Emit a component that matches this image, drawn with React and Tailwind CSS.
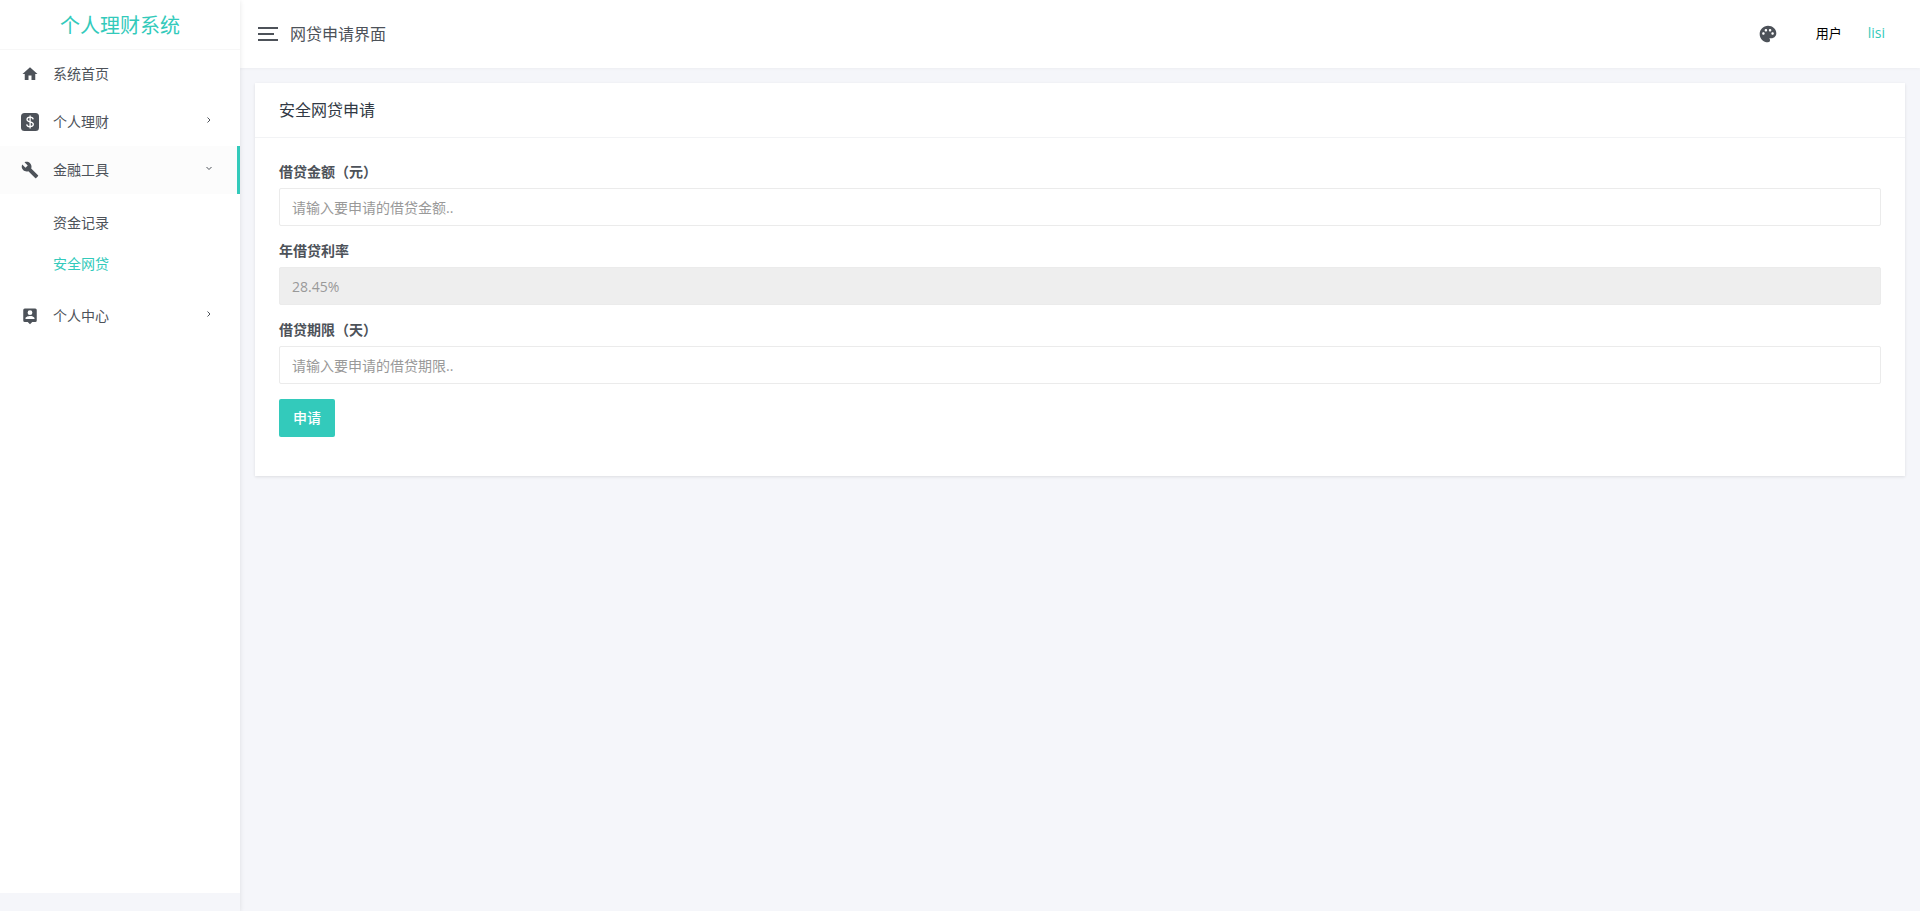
import { MdHome, MdPalette, MdBuild } from "react-icons/md";

function DollarIcon() {
  return (
    <svg viewBox="0 0 18 18" className="size-[18px]" aria-hidden="true">
      <rect width="18" height="18" rx="3.5" fill="currentColor" />
      <path
        d="M12.2 6.3C12 4.9 10.9 4.2 9.1 4.2C7.3 4.2 6 5.1 6 6.5C6 9.7 12.3 7.9 12.3 11.3C12.3 12.8 11 13.7 9.1 13.7C7.1 13.7 5.9 12.8 5.700 11.3M9.1 2.6V15.4"
        fill="none"
        stroke="#fff"
        strokeWidth="1.3"
      />
    </svg>
  );
}

function AccountPinIcon() {
  return (
    <svg viewBox="0 0 24 24" className="size-[18px]" fill="currentColor" aria-hidden="true">
      <path
        fillRule="evenodd"
        d="M5 2H19A2 2 0 0 1 21 4V18A2 2 0 0 1 19 20H15L12 23L9 20H5A2 2 0 0 1 3 18V4A2 2 0 0 1 5 2ZM12 4.300A3.200 3.200 0 1 0 12 10.700A3.200 3.200 0 1 0 12 4.300ZM18 16V15.100C18 13.100 14 12 12 12C10 12 6 13.100 6 15.100V16Z"
      />
    </svg>
  );
}

function Chevron({ down }) {
  return (
    <svg viewBox="0 0 8 8" className="mr-6 mb-1 ml-auto size-2" aria-hidden="true">
      <path
        d={down ? "M1.500 3L4 5.500L6.500 3" : "M2.500 1.500L5 4L2.500 6.500"}
        fill="none"
        stroke="currentColor"
        strokeWidth="1"
      />
    </svg>
  );
}

function NavItem({ icon, label, chevron, active }) {
  return (
    <li>
      <a
        href="#"
        className={
          active
            ? "flex h-12 items-center border-r-[3px] border-[#33cabb] bg-[#fcfcfc]"
            : "flex h-12 items-center border-r-[3px] border-transparent"
        }
      >
        <span className="mr-[13px] ml-5 flex w-5 justify-center">{icon}</span>
        <span>{label}</span>
        {chevron && <Chevron down={chevron === "down"} />}
      </a>
    </li>
  );
}

function Field({ id, label, ...props }) {
  return (
    <div className="mb-[15px]">
      <label htmlFor={id} className="mb-[6px] block leading-[20px] font-bold">
        {label}
      </label>
      <input
        id={id}
        type="text"
        className="block h-[38px] w-full rounded-[2px] border border-[#ebebeb] bg-white px-3 text-[#8b95a5] placeholder:text-[#999] placeholder:opacity-100 disabled:bg-[#eee] disabled:text-[#999]"
        {...props}
      />
    </div>
  );
}

export default function App() {
  return (
    <div className="flex min-h-screen bg-[#f5f6fa] font-['Open_Sans','Noto_Sans_CJK_SC',sans-serif] text-sm text-[#4d5259]">
      <aside className="z-10 flex w-60 shrink-0 flex-col pb-[18px] shadow-[0_1px_5px_rgba(0,0,0,0.1)]">
        <div className="flex h-[50px] items-center justify-center border-b border-[#f7f7f7] bg-white">
          <a href="#" className="font-['Noto_Sans_CJK_SC',sans-serif] text-xl text-[#33cabb]">
            个人理财系统
          </a>
        </div>
        <nav className="flex-1 bg-white">
          <ul>
            <NavItem icon={<MdHome className="size-[18px]" />} label="系统首页" />
            <NavItem icon={<DollarIcon />} label="个人理财" chevron="right" />
            <NavItem icon={<MdBuild className="size-[18px]" />} label="金融工具" chevron="down" active />
            <li>
              <ul className="py-2">
                <li>
                  <a href="#" className="flex h-[41px] items-center pl-[53px]">资金记录</a>
                </li>
                <li>
                  <a href="#" className="flex h-[41px] items-center pl-[53px] text-[#33cabb]">安全网贷</a>
                </li>
              </ul>
            </li>
            <NavItem icon={<AccountPinIcon />} label="个人中心" chevron="right" />
          </ul>
        </nav>
      </aside>

      <div className="min-w-0 flex-1">
        <header className="flex h-[68px] items-center bg-white pr-[35px] pl-[18px] shadow-[0_1px_3px_rgba(0,0,0,0.04)]">
          <button type="button" aria-label="菜单" className="flex w-5 flex-col gap-1">
            <span className="h-[2px] w-5 bg-[#4d5259]" />
            <span className="h-[2px] w-4 bg-[#4d5259]" />
            <span className="h-[2px] w-5 bg-[#4d5259]" />
          </button>
          <h1 className="ml-3 text-base">网贷申请界面</h1>
          <button type="button" aria-label="主题" className="ml-auto">
            <MdPalette className="size-5" />
          </button>
          <div className="ml-[38px] flex items-center gap-[26px] pb-[2px]">
            <span className="text-[13px] text-black">用户</span>
            <a href="#" className="text-[#33cabb]">lisi</a>
          </div>
        </header>

        <main className="p-[15px]">
          <section className="bg-white shadow-[0_1px_3px_rgba(0,0,0,0.1)]">
            <div className="border-b border-[#f2f3f5] px-6 py-[15px]">
              <h2 className="text-base leading-[24px] text-[#313944]">安全网贷申请</h2>
            </div>
            <form className="px-6 pt-6 pb-[39px]" onSubmit={(e) => e.preventDefault()}>
              <Field id="amount" label="借贷金额（元）" placeholder="请输入要申请的借贷金额.." />
              <Field id="rate" label="年借贷利率" defaultValue="28.45%" disabled />
              <Field id="term" label="借贷期限（天）" placeholder="请输入要申请的借贷期限.." />
              <button type="submit" className="h-[38px] w-14 rounded-[2px] bg-[#33cabb] font-medium text-white">
                申请
              </button>
            </form>
          </section>
        </main>
      </div>
    </div>
  );
}
